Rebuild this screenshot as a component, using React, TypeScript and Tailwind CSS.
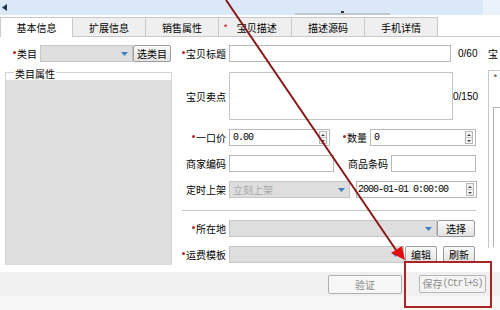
import React from 'react';

const font = { fontFamily: '"Noto Sans CJK SC", "Liberation Sans", sans-serif' };

// small red dot used for required fields
const Req: React.FC = () => <span className="inline-block w-[3px] h-[3px] rounded-full bg-[#b02a2a] mr-[1px] mb-[2px]" />;

const Arrow: React.FC = () => (
  <svg width="7" height="4" viewBox="0 0 7 4" className="shrink-0">
    <path d="M0 0 L7 0 L3.5 4 Z" fill="#3d7fc4" />
  </svg>
);

const Spinner: React.FC = () => (
  <div className="flex flex-col w-[8px] h-[13px] border border-[#b8b8b8] bg-[#f4f4f4] mr-[2px] shrink-0">
    <div className="flex-1 flex items-center justify-center border-b border-[#c8c8c8]">
      <svg width="4" height="2" viewBox="0 0 4 2"><path d="M0 2 L4 2 L2 0 Z" fill="#444" /></svg>
    </div>
    <div className="flex-1 flex items-center justify-center">
      <svg width="4" height="2" viewBox="0 0 4 2"><path d="M0 0 L4 0 L2 2 Z" fill="#444" /></svg>
    </div>
  </div>
);

interface BtnProps {
  label: string;
  className?: string;
  muted?: boolean;
}

const Btn: React.FC<BtnProps> = ({ label, className = '', muted }) => (
  <div
    className={`h-[17px] flex items-center justify-center border rounded-[2px] text-[10px] ${
      muted ? 'border-[#b0b0b0] bg-[#f7f7f7] text-[#8a8a8a]' : 'border-[#9c9c9c] bg-gradient-to-b from-[#fbfbfb] to-[#e3e3e3] text-black'
    } ${className}`}
  >
    {label}
  </div>
);

const Combo: React.FC<{ className?: string; text?: string }> = ({ className = '', text }) => (
  <div className={`h-[17px] flex items-center justify-between bg-[#dedede] border border-[#c6c6c6] pl-[3px] pr-[4px] ${className}`}>
    <span className="text-[10px] text-[#a8a8a8]">{text}</span>
    <Arrow />
  </div>
);

const Label: React.FC<{ text: string; req?: boolean; className?: string }> = ({ text, req, className = 'w-[50px]' }) => (
  <div className={`shrink-0 flex items-center justify-end text-[10px] text-black ${className}`}>
    {req && <Req />}
    {text}
  </div>
);

const mono = { fontFamily: '"Liberation Mono", monospace' };
const sans = { fontFamily: '"Liberation Sans", sans-serif' };

const App: React.FC = () => {
  const tabs = ['基本信息', '扩展信息', '销售属性', '宝贝描述', '描述源码', '手机详情'];

  return (
    <div className="relative w-[500px] h-[310px] overflow-hidden bg-white" style={font}>
      {/* top strip */}
      <div className="h-[15px] flex bg-[#dbe8f7]">
        <div className="flex-1 relative flex items-center pl-[2px]">
          <svg width="5" height="7" viewBox="0 0 5 7"><path d="M5 0 L5 7 L0 3.5 Z" fill="#1f3550" /></svg>
          <div className="absolute left-[295px] bottom-0 w-[95px] h-[2px] bg-[#bfc6cf]" />
          <div className="absolute left-[341px] bottom-[2px] w-[3px] h-[2px] bg-[#333]" />
        </div>
        <div className="w-[17px] bg-[#eaf2fb]" />
      </div>

      {/* tabs */}
      <div className="h-[22px] flex items-end pt-[2px]">
        {tabs.map((t, i) => (
          <div
            key={t}
            className={`w-[73px] h-[20px] flex items-center justify-center text-[10px] text-black border-t border-r border-[#c9c9c9] ${
              i === 0 ? 'bg-white border-l' : 'bg-[#efefef] border-b'
            }`}
          >
            {i === 3 && <span className="text-[#d02020] mr-[9px] -ml-[10px]">*</span>}
            {t}
          </div>
        ))}
        <div className="flex-1 h-[20px] border-b border-[#c9c9c9]" />
      </div>

      {/* content */}
      <div className="h-[228px] flex">
        {/* left column */}
        <div className="w-[176px] pl-[5px] pr-[4px] pt-[8px] flex flex-col">
          <div className="h-[17px] flex items-center">
            <Label text="类目" req className="w-[32px]" />
            <Combo className="w-[93px] ml-[3px]" />
            <Btn label="选类目" className="w-[38px]" />
          </div>
          <div className="mt-[10px] flex-1 flex flex-col border border-[#d4d4d4] border-b-0">
            <div className="h-[11px] text-[10px] leading-[10px] pl-[8px] -mt-[4px] text-black">
              <span className="bg-white px-[1px]">类目属性</span>
            </div>
            <div className="flex-1 bg-[#dedede]" />
          </div>
        </div>

        {/* form */}
        <div className="w-[308px] pt-[8px] flex flex-col">
          <div className="h-[17px] flex items-center">
            <Label text="宝贝标题" req />
            <div className="w-[222px] h-[17px] ml-[3px] border border-[#b9b9b9] bg-white" />
            <span className="ml-[7px] text-[10px]" style={sans}>0/60</span>
          </div>

          <div className="h-[48px] mt-[10px] flex items-center">
            <Label text="宝贝卖点" />
            <div className="w-[224px] h-[48px] ml-[3px] border border-[#c4c4c4] bg-white" />
            <span className="text-[10px]" style={sans}>0/150</span>
          </div>

          <div className="h-[17px] mt-[9px] flex items-center">
            <Label text="一口价" req />
            <div className="w-[101px] h-[17px] ml-[3px] border border-[#b9b9b9] bg-white flex items-center justify-between pl-[3px]">
              <span className="text-[10px] tracking-[-1px]" style={mono}>0.00</span>
              <Spinner />
            </div>
            <Label text="数量" req className="w-[37px]" />
            <div className="w-[106px] h-[17px] ml-[3px] border border-[#b9b9b9] bg-white flex items-center justify-between pl-[3px]">
              <span className="text-[10px]" style={mono}>0</span>
              <Spinner />
            </div>
          </div>

          <div className="h-[17px] mt-[9px] flex items-center">
            <Label text="商家编码" />
            <div className="w-[105px] h-[17px] ml-[3px] border border-[#b9b9b9] bg-white" />
            <Label text="商品条码" className="w-[54px]" />
            <div className="w-[85px] h-[17px] ml-[3px] border border-[#b9b9b9] bg-white" />
          </div>

          <div className="h-[17px] mt-[9px] flex items-center">
            <Label text="定时上架" />
            <Combo className="w-[121px] ml-[3px]" text="立刻上架" />
            <div className="w-[121px] h-[17px] ml-[6px] border border-[#b9b9b9] bg-white flex items-center justify-between pl-[1px]">
              <span className="text-[10px] tracking-[-1px]" style={mono}>2000-01-01 0:00:00</span>
              <Spinner />
            </div>
          </div>

          <div className="mt-[12px] ml-[6px] w-[294px] h-[2px] border-t border-[#c2c2c2] border-b border-b-white" />

          <div className="h-[17px] mt-[8px] flex items-center">
            <Label text="所在地" req />
            <Combo className="w-[208px] ml-[3px]" />
            <Btn label="选择" className="w-[38px]" />
          </div>

          <div className="h-[17px] mt-[9px] flex items-center">
            <Label text="运费模板" req />
            <Combo className="w-[175px] ml-[3px]" />
            <Btn label="编辑" className="w-[32px] ml-[1px]" />
            <Btn label="刷新" className="w-[32px] ml-[6px]" />
          </div>
        </div>

        {/* right, cut off column */}
        <div className="flex-1 pt-[8px] pl-[4px] flex flex-col">
          <div className="h-[17px] flex items-center text-[10px]">宝</div>
          <div className="mt-[8px] h-[178px] border-l border-t border-[#c8c8c8] pl-[4px] pt-[2px]">
            <div className="text-[10px] leading-[10px] text-[#555]">*</div>
            <div className="mt-[24px] h-[140px] border-l border-t border-[#b0b0b0]" />
          </div>
        </div>
      </div>

      {/* bottom bar */}
      <div className="h-[24px] mt-[7px] bg-[#f0f0f0] flex items-center justify-end pr-[14px]">
        <Btn label="验证" muted className="w-[74px] h-[19px]" />
        <div className="ml-[17px] w-[67px] h-[18px] border border-[#b5b5b5] rounded-[2px] bg-[#f4f4f4] flex items-center justify-center text-[10px] leading-[12px] text-[#8e8e8e] whitespace-nowrap">
          <span>保存</span>
          <span className="tracking-[-1px]" style={mono}>(Ctrl+S)</span>
        </div>
      </div>
      <div className="h-[14px] bg-[#f7f7f7]" />

      {/* annotation overlay */}
      <svg className="absolute left-0 top-0 pointer-events-none" width="500" height="310" viewBox="0 0 500 310">
        <line x1="226" y1="0" x2="396" y2="250" stroke="#8a1717" strokeWidth="2" />
        <polygon points="391,253 402,246 405,260" fill="#e01010" />
        <rect x="405" y="262" width="86" height="45" fill="none" stroke="#ad2424" strokeWidth="2" />
      </svg>
    </div>
  );
};

export default App;
